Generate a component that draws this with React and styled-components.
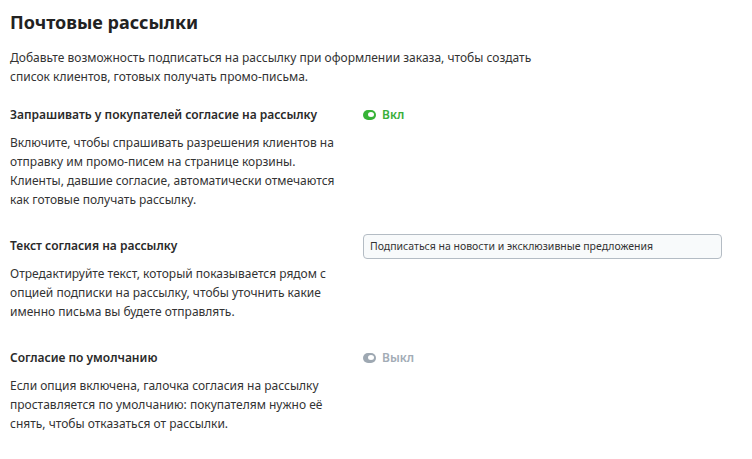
import React from "react";
import styled, { createGlobalStyle } from "styled-components";

const GlobalStyle = createGlobalStyle`
     body {
          margin: 0;
          background: #fff;
          font-family: "Noto Sans", "Open Sans", sans-serif;
          color: #333;
     }
`;

const settings = [
     {
          id: "ask",
          title: "Запрашивать у покупателей согласие на рассылку",
          text: "Включите, чтобы спрашивать разрешения клиентов на отправку им промо-писем на странице корзины. Клиенты, давшие согласие, автоматически отмечаются как готовые получать рассылку.",
          control: { type: "toggle", on: true },
     },
     {
          id: "text",
          title: "Текст согласия на рассылку",
          text: "Отредактируйте текст, который показывается рядом с опцией подписки на рассылку, чтобы уточнить какие именно письма вы будете отправлять.",
          control: { type: "input", value: "Подписаться на новости и эксклюзивные предложения" },
     },
     {
          id: "default",
          title: "Согласие по умолчанию",
          text: "Если опция включена, галочка согласия на рассылку проставляется по умолчанию: покупателям нужно её снять, чтобы отказаться от рассылки.",
          control: { type: "toggle", on: false },
     },
];

function Toggle({ on }) {
     return (
          <STToggle $on={on}>
               <span className="track">
                    <span className="knob" />
               </span>
               {on ? "Вкл" : "Выкл"}
          </STToggle>
     );
}

function App() {
     return (
          <STPage>
               <GlobalStyle />
               <STTitle>Почтовые рассылки</STTitle>
               <STIntro>
                    Добавьте возможность подписаться на рассылку при оформлении заказа, чтобы создать
                    <br />
                    список клиентов, готовых получать промо-письма.
               </STIntro>
               {settings.map((item) => (
                    <STRow key={item.id}>
                         <div>
                              <STLabel>{item.title}</STLabel>
                              <STText>{item.text}</STText>
                         </div>
                         <STControl>
                              {item.control.type === "toggle" ? (
                                   <Toggle on={item.control.on} />
                              ) : (
                                   <STInput defaultValue={item.control.value} />
                              )}
                         </STControl>
                    </STRow>
               ))}
          </STPage>
     );
}

export default App;

const STPage = styled.div`
     width: 752px;
     height: 459px;
     padding: 10px 30px 0 10px;
     box-sizing: border-box;
`;

const STTitle = styled.h1`
     margin: 0;
     font-size: 18px;
     font-weight: 700;
     line-height: 24px;
     color: #222;
`;

const STIntro = styled.p`
     margin: 14px 0 0;
     font-size: 12px;
     line-height: 19.3px;
`;

const STRow = styled.div`
     display: grid;
     grid-template-columns: 353px 1fr;
     margin-top: 18px;
     & + & {
          margin-top: 26px;
     }
`;

const STLabel = styled.div`
     font-size: 12px;
     font-weight: 600;
     line-height: 20px;
     color: #2a2a2a;
`;

const STText = styled.p`
     margin: 8px 0 0;
     width: 330px;
     font-size: 12px;
     line-height: 19.3px;
`;

const STControl = styled.div`
     display: flex;
     align-items: flex-start;
`;

const STToggle = styled.div`
     display: flex;
     align-items: center;
     gap: 6px;
     height: 20px;
     font-size: 12px;
     font-weight: 600;
     color: ${(p) => (p.$on ? "#3aaf3a" : "#a3acb6")};
     .track {
          display: flex;
          align-items: center;
          justify-content: flex-end;
          width: 13px;
          height: 10px;
          padding: 0 2px;
          box-sizing: border-box;
          border-radius: 5px;
          background: ${(p) => (p.$on ? "#36b336" : "#9ea8b2")};
     }
     .knob {
          width: 6px;
          height: 5px;
          border-radius: 50%;
          background: #fff;
     }
`;

const STInput = styled.input`
     width: 359px;
     height: 25px;
     margin-top: -2px;
     padding: 0 6px;
     box-sizing: border-box;
     border: 1px solid #b4bcc4;
     border-radius: 4px;
     background: #f8fafb;
     font-family: "Noto Sans", "Open Sans", sans-serif;
     font-size: 10.5px;
     color: #333;
     outline: none;
`;
